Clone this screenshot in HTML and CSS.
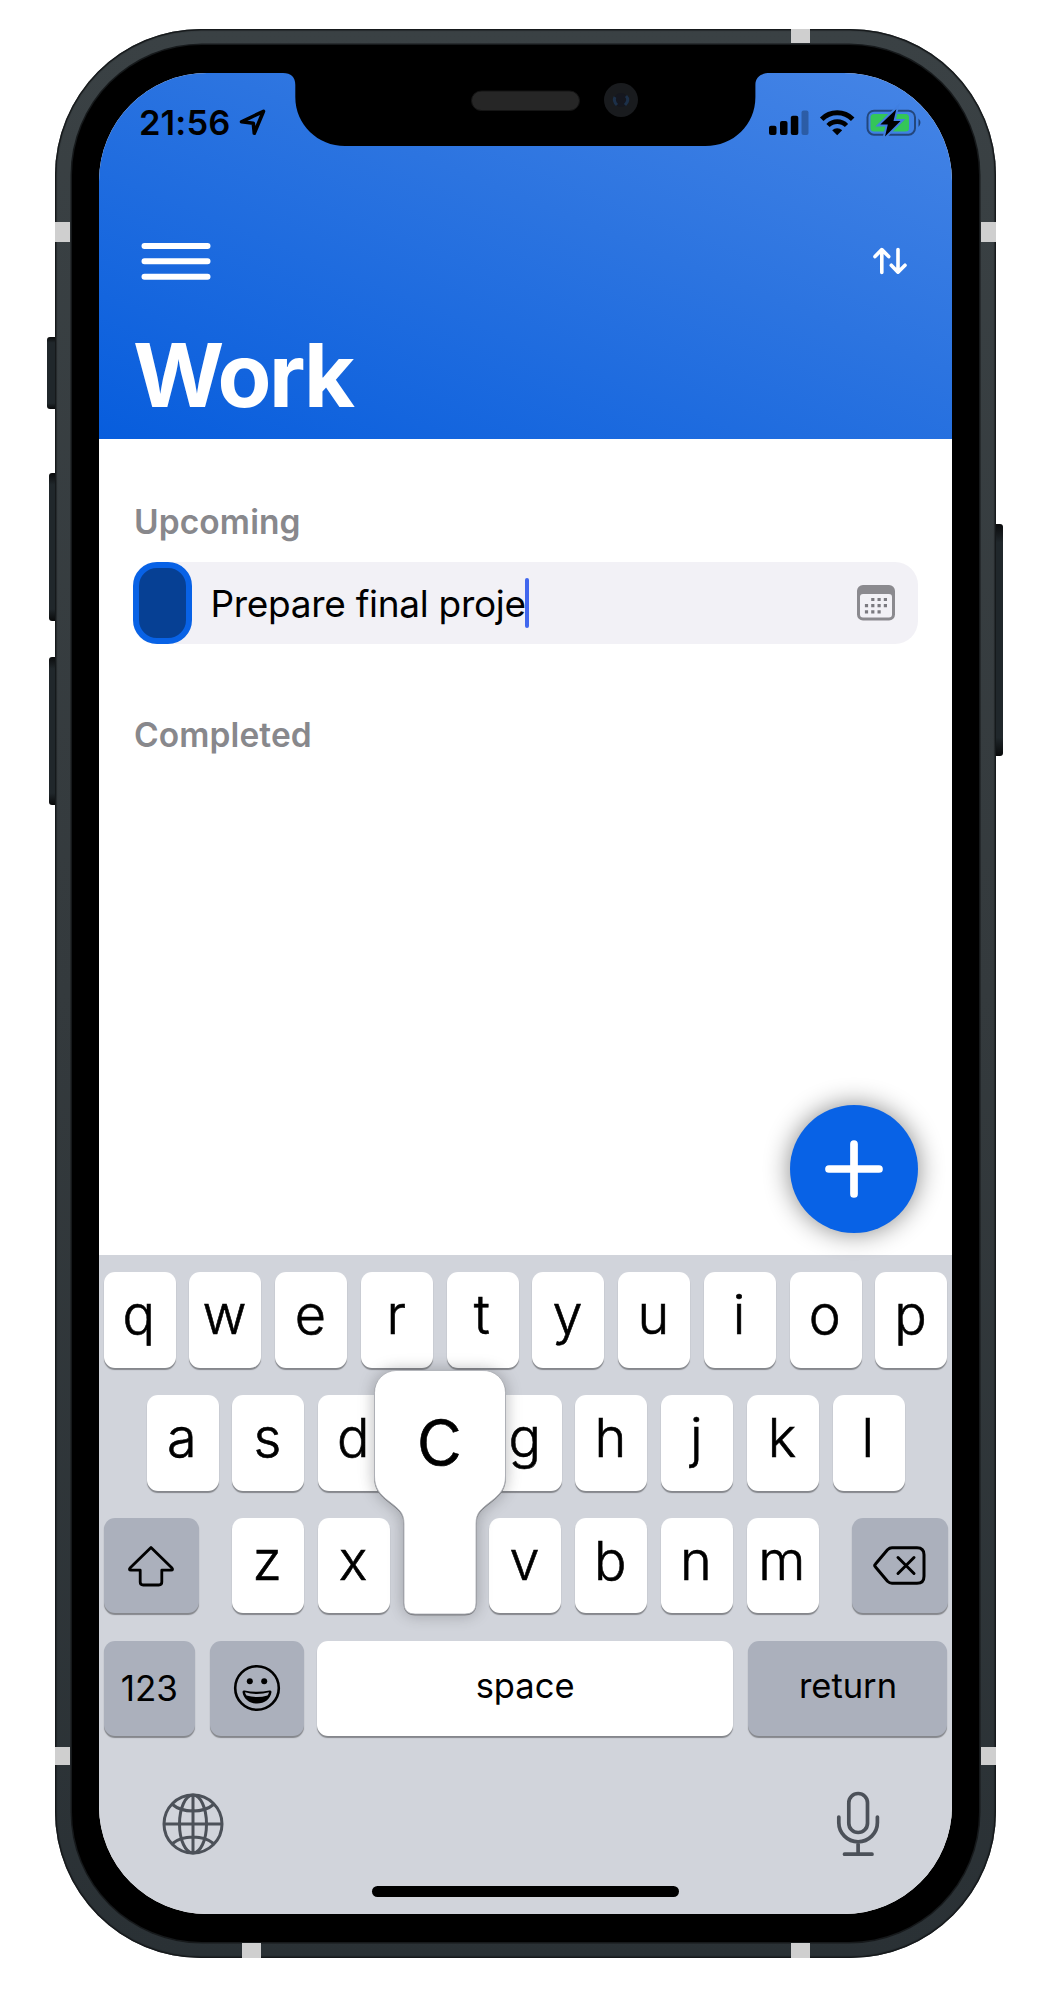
FILE: index.html
```html
<!DOCTYPE html>
<html lang="en">
<head>
<meta charset="utf-8">
<title>Work</title>
<link rel="stylesheet" href="styles.css">
</head>
<body>
<div class="phone">
  <i class="side side-mute"></i><i class="side side-up"></i><i class="side side-down"></i><i class="side side-power"></i>
  <i class="band band-top"></i><i class="band band-l1"></i><i class="band band-r1"></i><i class="band band-l2"></i><i class="band band-r2"></i><i class="band band-b1"></i><i class="band band-b2"></i>
  <div class="bezel">
    <div class="screen">
      <header class="header">
        <svg class="notch" width="487" height="73" viewBox="0 0 487 73">
          <path d="M0 0h487c-9 0-14.600 4-14.600 12v12c0 28-22 49-50 49H62c-27 0-49.700-21-49.700-49V12C12.300 4 8 0 0 0z" fill="#000"/>
          <rect x="188.500" y="18" width="108" height="19.500" rx="9.700" fill="#262626" stroke="#151515"/>
          <circle cx="338" cy="27" r="17" fill="#191b1e"/>
          <circle cx="338" cy="27" r="7" fill="#15171f"/>
          <path d="M332 24q-2 4 2 8M343 23q4 4-1 9" fill="none" stroke="#1c3049" stroke-width="3"/>
        </svg>
        <div class="status">
          <span class="time">21:56</span>
          <svg class="loc" width="30" height="30" viewBox="0 0 30 30"><path d="M3.500 13.800 25.500 3.300 16.300 25.200 15.300 15.300z" fill="none" stroke="#000" stroke-width="3.600" stroke-linejoin="round"/></svg>
          <svg class="signals" width="156" height="30" viewBox="0 0 156 30">
            <rect x="1" y="17.700" width="7.500" height="9.300" rx="2"/><rect x="12" y="13" width="7.500" height="14" rx="2"/><rect x="22.800" y="7.700" width="7.500" height="19.300" rx="2"/><rect x="33.500" y="2.500" width="7" height="24.500" rx="2" opacity=".27"/>
            <g fill="none" stroke="#000" stroke-width="5"><path d="M53.700 11.200a22 22 0 0 1 31 0"/><path d="M60 17.500a13 13 0 0 1 18.500 0" stroke-width="4.600"/></g>
            <path d="M69.200 27.300l-5-5a7.300 7.300 0 0 1 10 0z"/>
            <rect x="99.500" y="2.700" width="47.500" height="24" rx="6.500" fill="none" stroke="#000" stroke-opacity=".45" stroke-width="2"/>
            <path d="M150.500 10.500q3.800 4 0 8.500z" opacity=".5"/>
            <rect x="102.500" y="6" width="38.500" height="17.500" rx="3.500" fill="#34c658"/>
            <path d="M128.300 1.200 112.300 16.500h7.500L117 28.500 132.500 13h-7z" stroke="#407fe1" stroke-width="4" paint-order="stroke"/>
          </svg>
        </div>
        <div class="toolbar">
          <svg width="71" height="38" viewBox="0 0 71 38" stroke="#fff" stroke-width="6" stroke-linecap="round"><path d="M4.500 4h63M4.500 19.300h63M4.500 34.700h63"/></svg>
          <svg width="36" height="30" viewBox="0 0 36 30" fill="none" stroke="#fff" stroke-width="3.600" stroke-linecap="round" stroke-linejoin="round"><path d="M9.800 26.500V3.800M3 10.600l6.800-7 6.900 7M26 3.500v22.500M19.300 19.200l6.700 7 7-7"/></svg>
        </div>
        <h1>Work</h1>
      </header>
      <main class="content">
        <h2>Upcoming</h2>
        <div class="task">
          <span class="check"></span>
          <span class="label">Prepare final proje</span><span class="caret"></span>
          <svg class="cal" width="38" height="36" viewBox="0 0 38 36">
            <path fill-rule="evenodd" fill="#8b8a8f" d="M6 0h26a6 6 0 0 1 6 6v23.500a6 6 0 0 1-6 6H6a6 6 0 0 1-6-6V6a6 6 0 0 1 6-6zM6 9Q3 9 3 12v17.500q0 3 3 3h26q3 0 3-3V12q0-3-3-3z"/>
            <g fill="none" stroke="#7b7a80" stroke-width="3.200" stroke-dasharray="3.200 3.100"><path d="M14.200 14.500h16M7.900 20.700h22.200M7.900 26.900h16"/></g>
          </svg>
        </div>
        <h2 class="done">Completed</h2>
        <button class="fab"><svg width="58" height="58" viewBox="0 0 58 58" stroke="#fff" stroke-width="7.700" stroke-linecap="round"><path d="M29 4v50M4 29h50"/></svg></button>
      </main>
      <section class="keyboard">
        <div class="row"><b class="key">q</b><b class="key">w</b><b class="key">e</b><b class="key">r</b><b class="key">t</b><b class="key">y</b><b class="key">u</b><b class="key">i</b><b class="key">o</b><b class="key">p</b></div>
        <div class="row"><b class="key">a</b><b class="key">s</b><b class="key">d</b><b class="key"></b><b class="key">g</b><b class="key">h</b><b class="key">j</b><b class="key">k</b><b class="key">l</b></div>
        <div class="row spread">
          <b class="key dark shift"><svg width="48" height="42" viewBox="0 0 48 42"><path d="M24 2.500 3 23q-1.500 2 1 2.200h9.200V37q0 3 3 3h15.600q3 0 3-3V25.200H44q2.500-.2 1-2.200z" fill="none" stroke="#000" stroke-width="2.800" stroke-linejoin="round"/></svg></b>
          <div class="letters"><b class="key">z</b><b class="key">x</b>
            <b class="key pressed"><svg class="bubble" width="136" height="248" viewBox="0 0 136 248"><path d="M24 1.500h86a22 22 0 0 1 23.500 22V107c0 12-5 18-14 25-10 8-15.500 11-15.500 23v79q0 11-11 11H43q-11 0-11-11v-79c0-12-5.500-15-15.500-23C7.500 125 2.500 119 2.500 107V23.500A22 22 0 0 1 24 1.500z" fill="#fff" stroke="#a9acb2" stroke-width=".8"/></svg><span>c</span></b>
            <b class="key">v</b><b class="key">b</b><b class="key">n</b><b class="key">m</b></div>
          <b class="key dark shift"><svg width="54" height="42" viewBox="0 0 54 42" fill="none" stroke="#000" stroke-width="3" stroke-linecap="round" stroke-linejoin="round"><path d="M19 2.800h25q7 0 7 7v21.500q0 7-7 7H19q-2.500 0-4.500-2L2.500 22q-1.500-1.500 0-3L14.500 4.800q2-2 4.500-2zM25 12.500l16 16M41 12.500l-16 16"/></svg></b>
        </div>
        <div class="row spread">
          <b class="key dark num">123</b>
          <b class="key dark emoji"><svg width="48" height="48" viewBox="0 0 48 48"><circle cx="24" cy="24" r="21.800" fill="none" stroke="#000" stroke-width="2.600"/><circle cx="16.800" cy="17.200" r="3"/><circle cx="31.200" cy="17.200" r="3"/><path d="M9.500 28q0-2 2-1.500 12.500 2.600 25 0 2-.5 2 1.500c-1 7-7 11.500-14.500 11.500S10.500 35 9.500 28z"/><path d="M12 28.300q12 3.400 24 0-.3 2-1.500 3.200-10.500 3-21 0-1.200-1.200-1.500-3.200z" fill="#adb1bd"/></svg></b>
          <b class="key word space">space</b>
          <b class="key dark word return">return</b>
        </div>
        <div class="dock">
          <svg width="62" height="62" viewBox="0 0 62 62" fill="none" stroke="#4c5159" stroke-width="3"><circle cx="31" cy="31" r="29"/><ellipse cx="31" cy="31" rx="13.500" ry="29"/><path d="M31 2v58M2 31h58M10.500 11.500Q18 18 31 18t20.500-6.500M10.500 50.500Q18 44 31 44t20.500 6.500"/></svg>
          <svg width="44" height="66" viewBox="0 0 44 66" fill="none" stroke="#4c5159" stroke-width="3.700" stroke-linecap="round"><rect x="12.800" y="2.500" width="18.700" height="39" rx="9.300"/><path d="M2.800 26v5.500a19.300 19.300 0 0 0 38.600 0V26M22.100 51v12M8.500 63.200h27.500"/></svg>
        </div>
        <div class="home"></div>
      </section>
    </div>
  </div>
</div>
</body>
</html>
```
FILE: styles.css
```css
* { box-sizing: border-box; }
body { margin: 0; padding: 29px 0 0 55px; height: 1994px; overflow: hidden; background: #fff; font-family: Inter, "Liberation Sans", sans-serif; color: #000; }
svg { display: block; flex: none; overflow: visible; }

.phone { position: relative; width: 941px; height: 1929px; padding: 16px 17px; border-radius: 146px; background: linear-gradient(#3a4144, #343a3d 50%, #2a3135); box-shadow: inset 0 0 1px 1.500px #15181a; }
.bezel { height: 100%; padding: 28px 27px; border-radius: 130px; background: #000; box-shadow: 0 0 0 1.500px #16191b; }
.screen { display: flex; flex-direction: column; height: 100%; overflow: hidden; border-radius: 108px; background: #fff; }

.side { position: absolute; background: linear-gradient(#0a0b0c, #20272b 8%, #20272b 92%, #08090a); border-radius: 3px 0 0 3px; }
.side-mute { left: -8px; top: 308px; width: 8px; height: 72px; }
.side-up { left: -6px; top: 444px; width: 6px; height: 148px; }
.side-down { left: -6px; top: 628px; width: 6px; height: 148px; }
.side-power { right: -7px; top: 495px; width: 7px; height: 232px; border-radius: 0 3px 3px 0; }
.band { position: absolute; background: #cfcfcf; }
.band-top { left: 736px; top: 0; width: 19px; height: 14px; }
.band-l1, .band-r1 { top: 193px; width: 15px; height: 20px; }
.band-l2, .band-r2 { top: 1718px; width: 15px; height: 18px; }
.band-l1, .band-l2 { left: 0; }
.band-r1, .band-r2 { right: 0; }
.band-b1, .band-b2 { bottom: 0; width: 19px; height: 15px; }
.band-b1 { left: 187px; }
.band-b2 { left: 736px; }

.header { position: relative; height: 366px; padding: 35px 44px 0 41px; background: linear-gradient(22deg, #075ddd 0%, #2c74e0 58%, #4685e6 100%); color: #fff; }
.notch { position: absolute; left: 184px; top: 0; }
.status { display: flex; align-items: center; height: 30px; color: #000; }
.time { width: 99px; margin-left: -1px; font-size: 34.500px; font-weight: 600; line-height: 30px; letter-spacing: .1px; white-space: nowrap; }
.signals { margin: 0 -16px 0 auto; }
.toolbar { display: flex; justify-content: space-between; align-items: center; height: 38px; margin-top: 104px; }
h1 { margin: 42px 0 0 -7px; font-size: 88px; line-height: 106px; font-weight: 700; letter-spacing: -2.400px; }

.content { position: relative; height: 816px; padding: 62px 34px 0; }
h2 { margin: 0 0 0 1px; height: 40px; line-height: 42px; font-size: 33.500px; font-weight: 600; letter-spacing: .1px; color: #88888c; }
.task { display: flex; align-items: center; height: 82px; margin-top: 21px; padding-right: 23px; border-radius: 23px; background: #f2f1f6; }
.check { width: 59px; height: 82px; border: 6px solid #0862e6; border-radius: 24px; background: #064094; }
.label { margin-left: 18.500px; padding-top: 1px; font-size: 37px; line-height: 50px; letter-spacing: -.3px; white-space: nowrap; }
.caret { width: 4px; height: 50px; margin-left: -1px; border-radius: 2px; background: #4167ee; }
.cal { margin-left: auto; }
.done { margin-top: 70px; }
.fab { position: absolute; right: 34px; bottom: 22px; display: grid; place-items: center; width: 128px; height: 128px; padding: 0; border: 0; border-radius: 50%; background: #0862e6; box-shadow: 0 0 26px rgba(0, 0, 0, .48); }

.keyboard { display: flex; flex-direction: column; height: 659px; padding: 17.300px 4.500px 0; background: #d1d4db; }
.row { display: flex; justify-content: center; gap: 13.750px; height: 95.500px; margin-bottom: 27.300px; }
.letters { display: flex; gap: 13.750px; margin-left: -.5px; }
.spread { justify-content: space-between; gap: 0; }
.key { display: flex; justify-content: center; align-items: center; width: 72px; height: 95.500px; padding: 0 1.500px 11px 0; border-radius: 11px; background: #fff; box-shadow: 0 2px 1px #85878c; font-size: 54px; font-weight: 300; -webkit-text-stroke: .6px #000; }
.dark { padding: 0; background: #abb0bc; }
.shift { width: 95.500px; }
.pressed { position: relative; }
.bubble { position: absolute; left: -32px; top: -149px; filter: drop-shadow(0 0 8px rgba(0, 0, 0, .2)) drop-shadow(0 1px 0 #85878c); }
.pressed span { position: absolute; left: 0; width: 100%; top: -131px; text-align: center; font-size: 84px; line-height: 96px; }
.num, .word { font-weight: 400; -webkit-text-stroke: 0; }
.num { width: 91.500px; font-size: 35px; }
.emoji { width: 94px; margin-right: -2.500px; }
.word { padding: 0 0 5px; font-size: 34.500px; }
.space { width: 416.500px; }
.return { width: 199px; }
.dock { display: flex; justify-content: space-between; align-items: center; margin: 28px 68px 0 58px; height: 66px; }
.home { width: 307px; height: 11.500px; margin: 28.500px auto 0; border-radius: 6px; background: #000; }
```
